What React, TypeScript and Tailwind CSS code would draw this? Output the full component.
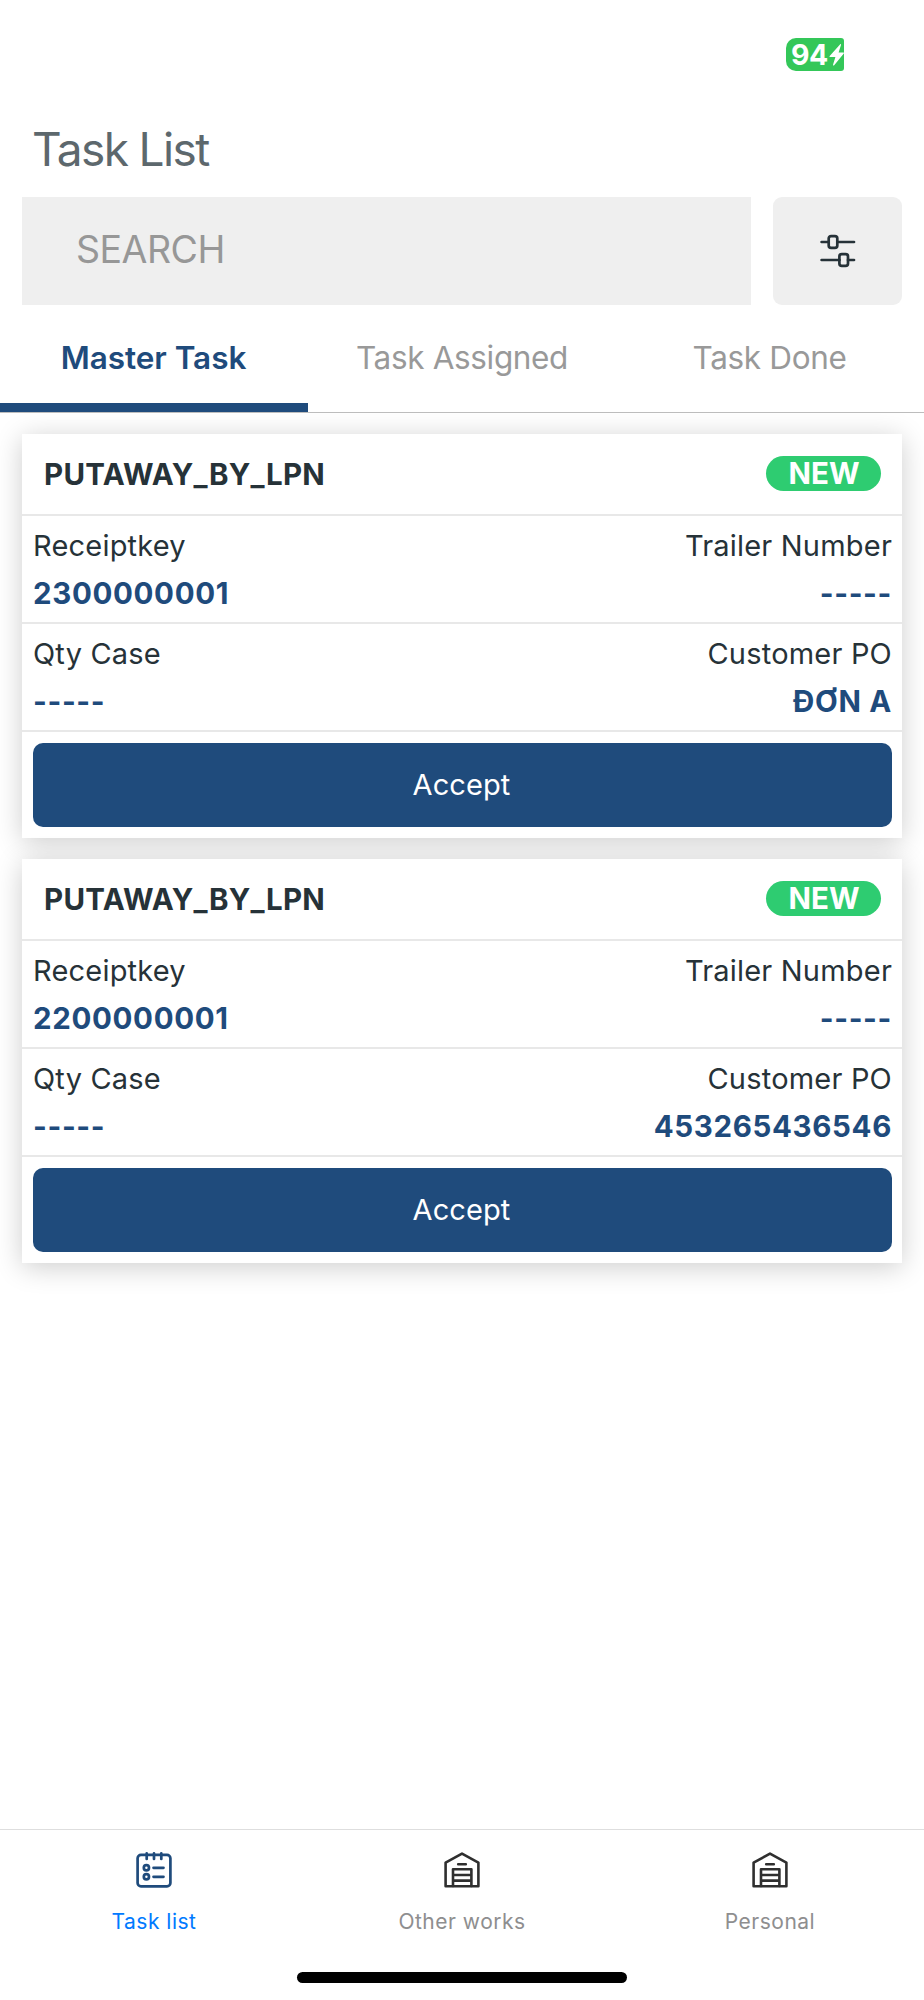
import React from "react";

type Task = { title: string; receiptKey: string; trailer: string; qty: string; po: string };

const EMPTY = "-----";

const tasks: Task[] = [
  { title: "PUTAWAY_BY_LPN", receiptKey: "2300000001", trailer: EMPTY, qty: EMPTY, po: "ĐƠN A" },
  { title: "PUTAWAY_BY_LPN", receiptKey: "2200000001", trailer: EMPTY, qty: EMPTY, po: "453265436546" },
];

function StatusBar() {
  return (
    <div className="flex h-[109px] shrink-0 pl-[786px] pt-[38px]">
      <div className="flex h-[33px] w-[58px] items-center overflow-hidden rounded-l-[10px] rounded-r-[3px] bg-[#34c759] pl-[5px] text-white">
        <span className="w-[38px] text-[28.5px] font-bold leading-[33px] tracking-[-0.4px]">94</span>
        <svg width="15" height="22" viewBox="0 0 15 22" className="ml-px shrink-0" fill="currentColor">
          <path d="M11 0.4C11.4-.2 12.2.2 12 .9L9.6 8.4H14.4C15 8.4 15.2 9 14.8 9.5L5.2 21.2C4.7 21.8 3.8 21.4 4.1 20.6L6.4 13H1.2C.6 13 .3 12.4.7 11.9Z" />
        </svg>
      </div>
    </div>
  );
}

function FilterIcon() {
  return (
    <svg width="36" height="34" viewBox="0 0 36 34" fill="none" stroke="#263238" strokeWidth="2.7" strokeLinecap="round">
      <path d="M1.6 8H8.5M17.5 8H34M1.6 26H19.5M28 26H34" />
      <rect x="8.7" y="2.1" width="8.6" height="11.8" rx="2.4" />
      <rect x="19.4" y="20.1" width="8.6" height="11.8" rx="2.4" />
    </svg>
  );
}

function TaskIcon() {
  return (
    <svg width="36" height="36" viewBox="0 0 36 36" fill="none" stroke="#1f4b7c" strokeWidth="2.7" strokeLinecap="round">
      <rect x="1.6" y="2.9" width="32.8" height="31.4" rx="3.4" />
      <path d="M10.7 1.4V7M18 1.4V7M25.3 1.4V7M17.5 15.8H27.5M17.5 24.8H27.5" />
      <circle cx="10.4" cy="15.8" r="2.6" />
      <circle cx="10.4" cy="24.8" r="2.6" />
    </svg>
  );
}

function WarehouseIcon() {
  return (
    <svg width="36" height="36" viewBox="0 0 36 36" fill="none" stroke="#2f2f2f" strokeWidth="2.6" strokeLinejoin="round" strokeLinecap="round">
      <path d="M1.6 34.3V10.6L18 1.6L34.4 10.6V34.3Z" />
      <path d="M9 34V17.2H27.4V34M9 23H27.4M9 28.6H27.4M14.2 12.2H21.8" />
    </svg>
  );
}

function Field({ label, value, right = false }: { label: string; value: string; right?: boolean }) {
  return (
    <div className={right ? "text-right" : "text-left"}>
      <div className="text-[29px] leading-[48px] tracking-[0.2px] text-[#263238]">{label}</div>
      <div className="text-[29.5px] font-bold leading-[47px] tracking-[0.65px] text-[#1f4b7c]">{value}</div>
    </div>
  );
}

function TaskCard({ task }: { task: Task }) {
  return (
    <article className="bg-white shadow-[0_4px_26px_rgba(0,0,0,0.2)]">
      <header className="flex h-[82px] items-center justify-between border-b-2 border-[#e8e8e8] pl-[22px] pr-[21.5px]">
        <h2 className="text-[29.5px] font-bold leading-[48px] tracking-[0.3px] text-[#263238]">{task.title}</h2>
        <span className="mb-[2px] flex h-[35px] w-[115px] items-center justify-center rounded-full bg-[#2ecc71] pl-[2px] text-[29.5px] font-bold leading-[35px] text-white">NEW</span>
      </header>
      <div className="flex h-[108px] justify-between border-b-2 border-[#e8e8e8] pl-[11px] pr-[10px] pt-[6px]">
        <Field label="Receiptkey" value={task.receiptKey} />
        <Field label="Trailer Number" value={task.trailer} right />
      </div>
      <div className="flex h-[108px] justify-between border-b-2 border-[#e8e8e8] pl-[11px] pr-[10px] pt-[6px]">
        <Field label="Qty Case" value={task.qty} />
        <Field label="Customer PO" value={task.po} right />
      </div>
      <div className="px-[10.5px] py-[11px]">
        <button className="block h-[84px] w-full rounded-[10px] bg-[#1f4b7c] pr-px text-[29px] tracking-[0.1px] text-white">Accept</button>
      </div>
    </article>
  );
}

export default function App() {
  return (
    <div className="flex h-[2000px] w-[924px] flex-col overflow-hidden bg-white font-['Inter',sans-serif]">
      <StatusBar />
      <h1 className="h-[88px] shrink-0 pl-[32px] text-[46px] leading-[80px] tracking-[-1.6px] text-[#5d686d]">Task List</h1>
      <div className="flex h-[107.5px] shrink-0 gap-[22px] px-[22px]">
        <div className="flex flex-1 items-center bg-[#efefef] pb-[2px] pl-[54px] text-[37.5px] tracking-[-0.5px] text-[#979797]">SEARCH</div>
        <button className="flex w-[129px] items-center justify-center rounded-[9px] bg-[#efefef]">
          <FilterIcon />
        </button>
      </div>
      <nav className="grid h-[108.5px] shrink-0 grid-cols-3 border-b border-[#bdbdbd] text-center text-[31.5px] leading-[106px] tracking-[-0.35px] text-[#999]">
        <div className="h-[107.5px] border-b-[9px] border-[#1f4b7c] pr-px font-semibold tracking-[-0.05px] text-[#1f4b7c]">
          <div className="h-[98px]">Master Task</div>
        </div>
        <div className="h-[107px]">Task Assigned</div>
        <div className="h-[107px] pr-px">Task Done</div>
      </nav>
      <main className="flex flex-1 flex-col gap-[21px] overflow-hidden px-[22px] pt-[21px]">
        {tasks.map((t) => (
          <TaskCard key={t.receiptKey} task={t} />
        ))}
      </main>
      <footer className="h-[171px] shrink-0 border-t border-[#dedede]">
        <div className="grid h-[142px] grid-cols-3 pt-[22px] text-[21px] tracking-[0.5px] text-[#8e8e8f]">
          <div className="flex flex-col items-center text-[#007aff]">
            <TaskIcon />
            <span className="mt-[18px] leading-[32px]">Task list</span>
          </div>
          <div className="flex flex-col items-center">
            <WarehouseIcon />
            <span className="mt-[18px] leading-[32px]">Other works</span>
          </div>
          <div className="flex flex-col items-center">
            <WarehouseIcon />
            <span className="mt-[18px] leading-[32px]">Personal</span>
          </div>
        </div>
        <div className="mx-auto h-[11px] w-[330px] rounded-full bg-black" />
      </footer>
    </div>
  );
}
